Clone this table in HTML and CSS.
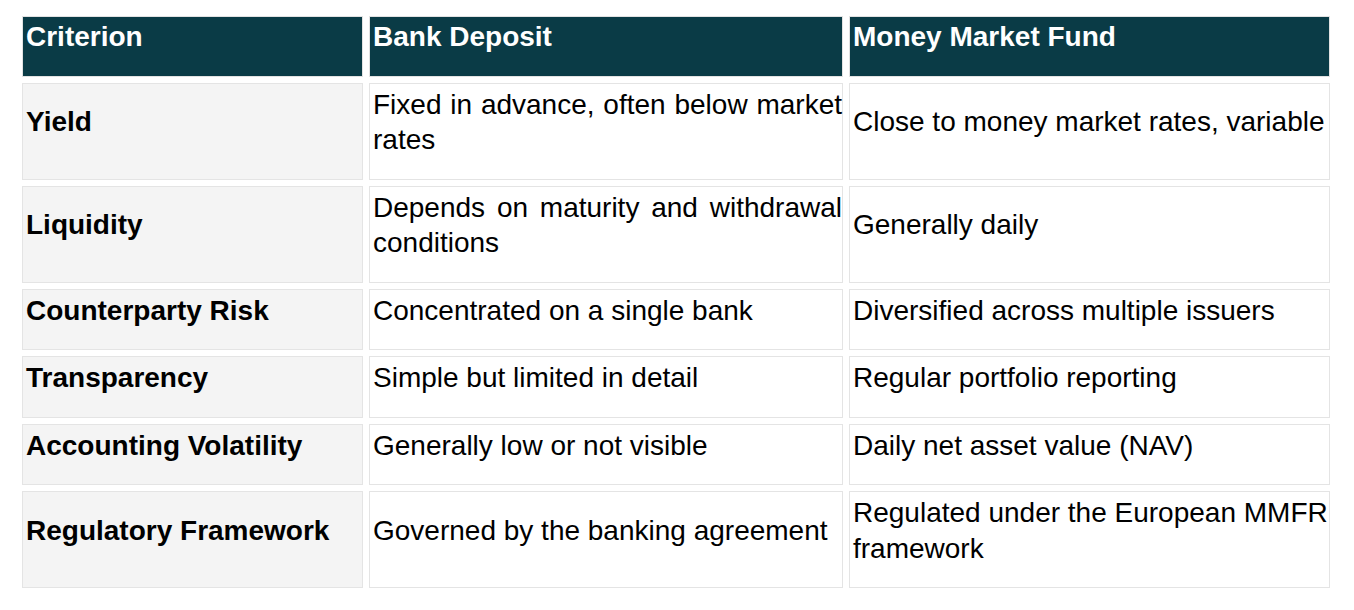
FILE: index.html
```html
<!DOCTYPE html>
<html lang="en">
<head>
<meta charset="utf-8">
<title>Bank Deposit vs Money Market Fund</title>
<link rel="stylesheet" href="styles.css">
</head>
<body>
<table class="cmp">
  <thead>
    <tr>
      <th class="c1"><p>Criterion</p></th>
      <th class="c2"><p>Bank Deposit</p></th>
      <th class="c3"><p>Money Market Fund</p></th>
    </tr>
  </thead>
  <tbody>
    <tr>
      <td class="crit"><p>Yield</p></td>
      <td class="bank"><p>Fixed in advance, often below market rates</p></td>
      <td class="fund"><p>Close to money market rates, variable</p></td>
    </tr>
    <tr>
      <td class="crit"><p>Liquidity</p></td>
      <td class="bank"><p>Depends on maturity and withdrawal conditions</p></td>
      <td class="fund"><p>Generally daily</p></td>
    </tr>
    <tr>
      <td class="crit"><p>Counterparty Risk</p></td>
      <td class="bank"><p>Concentrated on a single bank</p></td>
      <td class="fund"><p>Diversified across multiple issuers</p></td>
    </tr>
    <tr>
      <td class="crit"><p>Transparency</p></td>
      <td class="bank"><p>Simple but limited in detail</p></td>
      <td class="fund"><p>Regular portfolio reporting</p></td>
    </tr>
    <tr>
      <td class="crit"><p>Accounting Volatility</p></td>
      <td class="bank"><p>Generally low or not visible</p></td>
      <td class="fund"><p>Daily net asset value (NAV)</p></td>
    </tr>
    <tr>
      <td class="crit"><p>Regulatory Framework</p></td>
      <td class="bank"><p>Governed by the banking agreement</p></td>
      <td class="fund"><p>Regulated under the European MMFR framework</p></td>
    </tr>
  </tbody>
</table>
</body>
</html>
```
FILE: styles.css
```css
html, body {
  margin: 0;
  padding: 0;
  background: #ffffff;
}

body {
  font-family: "Liberation Sans", Arial, sans-serif;
  font-size: 28px;
  line-height: 35.5px;
  color: #000000;
}

.cmp {
  table-layout: fixed;
  border-collapse: separate;
  border-spacing: 6px;
  width: 1320px;
  margin: 10px 0 0 16px;
}

.cmp th,
.cmp td {
  box-sizing: border-box;
  border: 1px solid #e4e4e4;
  padding: 3px 0 0 3px;
  vertical-align: middle;
}

.cmp p {
  margin: 0 0 21px 0;
}

.cmp th {
  background: #0a3b46;
  color: #ffffff;
  font-weight: bold;
  text-align: left;
  padding-top: 2px;
  border-color: #e2e2e2;
}

.cmp .c1 { width: 341px; }
.cmp .c2 { width: 474px; }
.cmp .c3 { width: 481px; }

.cmp td {
  background: #ffffff;
  text-align: left;
}

.cmp td.bank {
  text-align: justify;
}

.cmp td.crit {
  background: #f4f4f4;
  font-weight: bold;
}
```
